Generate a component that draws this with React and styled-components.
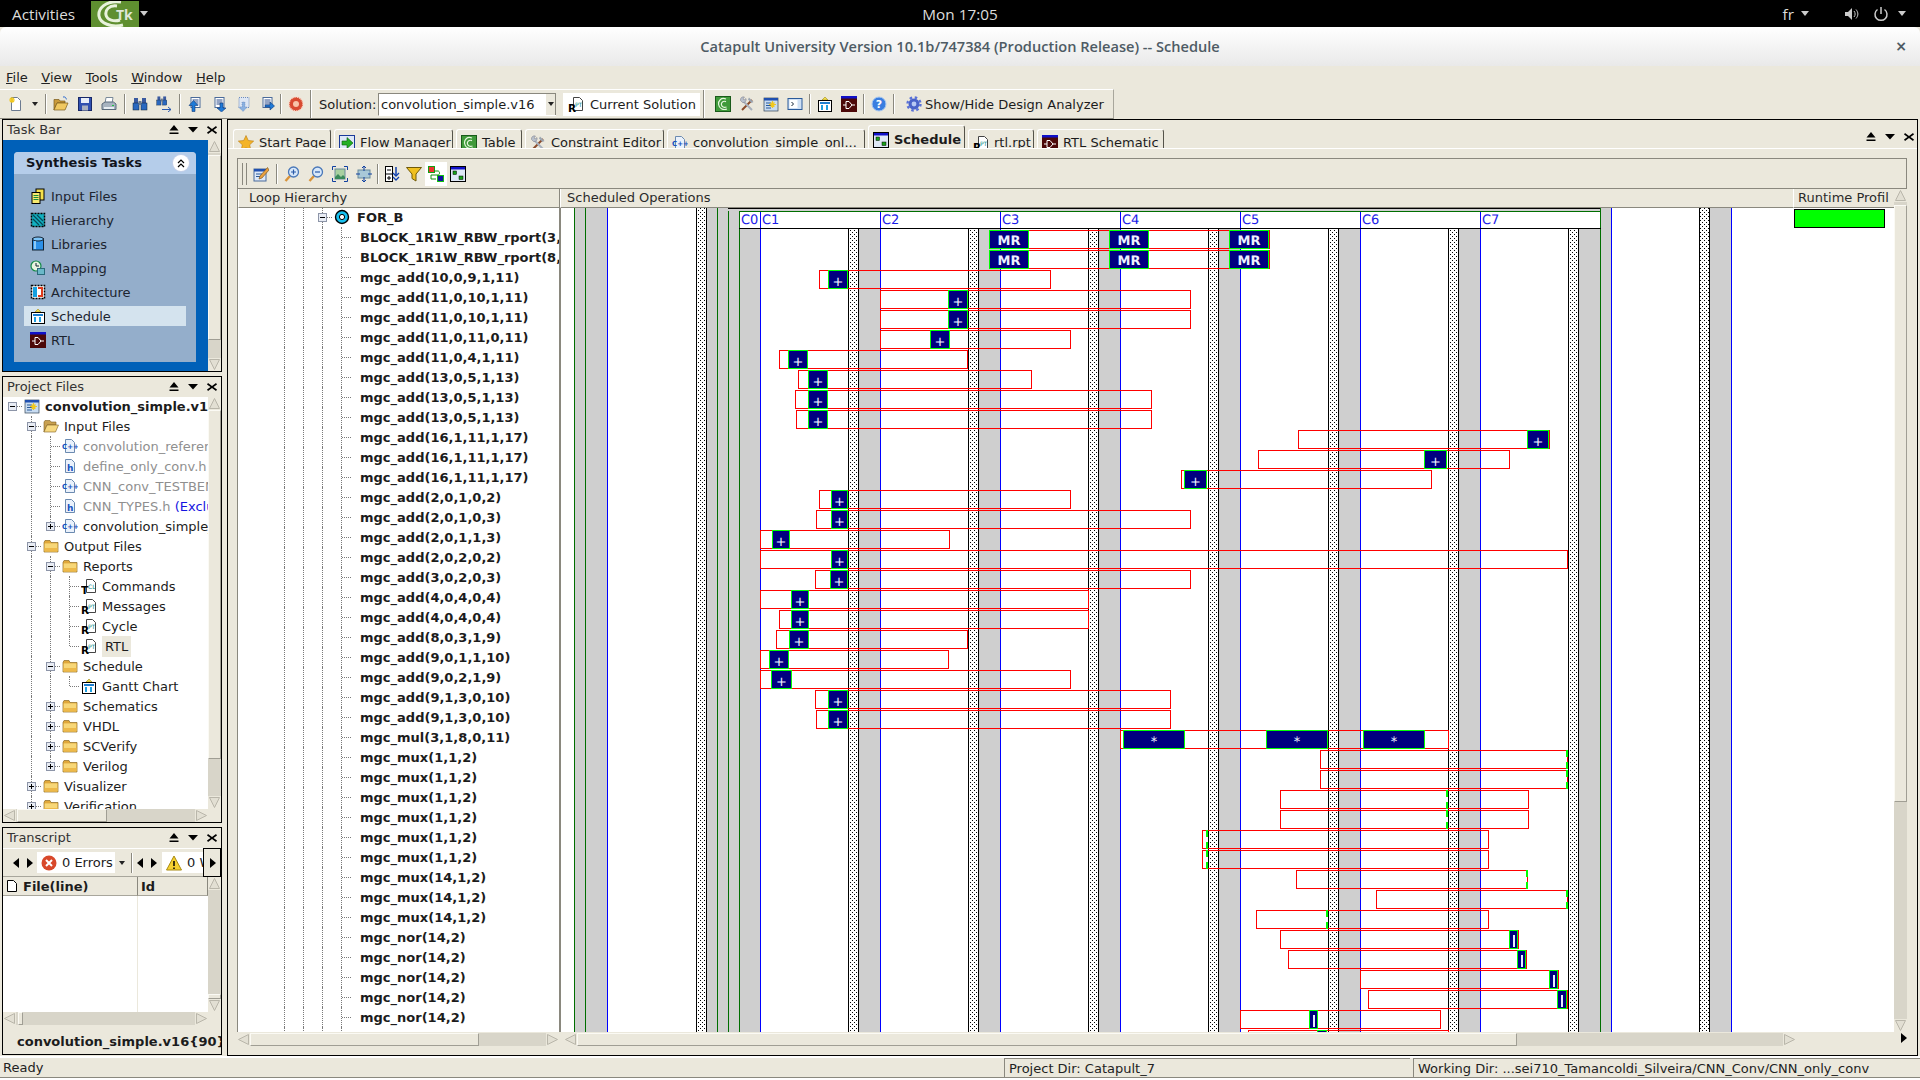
import React from 'react';
import styled, { createGlobalStyle } from 'styled-components';

const BASE = '#ebe8dc';
const UI = '"DejaVu Sans", sans-serif';
const SHELL = '"Open Sans", "Noto Sans", sans-serif';

const GlobalStyle = createGlobalStyle`
  html, body { margin: 0; padding: 0; background: #fff; overflow: hidden; }
  body { font: 13px ${UI}; color: #1c1c1c; }
  * { box-sizing: border-box; }
`;

/* ---------- small pixmap style icons ---------- */
const doc = (fill = '#fff', stroke = '#6b7a90') => (
  <path d="M3.5 1.5h6l3 3v10h-9z" fill={fill} stroke={stroke} />
);
const folder = (
  <>
    <path d="M1 4.5l1-2h5l1 2h7v9.5H1z" fill="#e0a83a" stroke="#8c6a22" strokeWidth=".7" />
    <path d="M1.6 5.4h12.8v8H1.6z" fill="#f7d778" />
    <path d="M1.6 10h12.8v3.4H1.6z" fill="#edb94a" />
  </>
);
const rptDoc = (a, b) => (
  <>
    <g transform="translate(2 0)">{doc('#fff', '#444')}</g>
    <text x="7" y="11" fontSize="6" fill="#0a8a8a" fontFamily={UI}>{b}</text>
    <text x="0" y="15.5" fontSize="10.500" fontWeight="700" fill="#000" fontFamily={UI}>{a}</text>
  </>
);
const schedIcon = (
  <>
    <path d="M5 4l3-3 3 3z" fill="#f4e04a" stroke="#a08a20" strokeWidth=".6" />
    <rect x="1.5" y="4.5" width="13" height="11" fill="#fff" stroke="#000" />
    <rect x="3" y="6" width="10" height="2" fill="#1e7fd0" />
    <rect x="4" y="9" width="2" height="5" fill="#1e9fe0" />
    <rect x="9" y="9" width="2" height="5" fill="#1e9fe0" />
  </>
);
const rtlIcon = (
  <>
    <rect x="0" y="0" width="16" height="16" fill="#4c0808" />
    <rect x="0" y="0" width="16" height="2.5" fill="#1010c8" />
    <path d="M2 9h3M11 9h3M5 5.5h3l3 3.5-3 3.5H5z" fill="none" stroke="#fff" />
  </>
);
const windowIcon = (
  <>
    <rect x=".5" y=".5" width="15" height="15" fill="#dfe8f6" stroke="#000" />
    <rect x="1" y="1" width="14" height="2.5" fill="#1010c8" />
    <rect x="3" y="5" width="3.5" height="3.5" fill="#18a018" stroke="#000" strokeWidth=".5" />
    <rect x="9" y="10" width="4" height="3.5" fill="#18a018" stroke="#000" strokeWidth=".5" />
  </>
);
const arrowDoc = (arrow) => (
  <>
    <rect x="4" y="1.5" width="9" height="10" fill="#fff" stroke="#4a6a9a" />
    <path d="M5.5 4h6M5.5 6h6M5.5 8h6" stroke="#2a4a8a" />
    {arrow}
  </>
);
const binoc = (
  <>
    <rect x="2" y="2" width="4" height="5" fill="#3a5aa0" />
    <rect x="10" y="2" width="4" height="5" fill="#3a5aa0" />
    <rect x="1" y="7" width="6" height="7" fill="#2a68c0" stroke="#123" strokeWidth=".5" />
    <rect x="9" y="7" width="6" height="7" fill="#2a68c0" stroke="#123" strokeWidth=".5" />
    <rect x="6.5" y="5" width="3" height="4" fill="#6a7a90" />
  </>
);
const lens = (sign) => (
  <>
    <path d="M6 10l-4.5 5" stroke="#d8933a" strokeWidth="2.4" />
    <circle cx="9.5" cy="6" r="5" fill="#d8e8fa" stroke="#4a78b8" strokeWidth="1.3" />
    <path d={sign} stroke="#2a5aa8" strokeWidth="1.2" />
  </>
);
const fitIcon = (
  <>
    <rect x="3" y="3" width="10" height="10" fill="#a8d0a0" stroke="#6a8a9a" />
    <path d="M3 11l3-3 3 3 2-2 2 2v2H3z" fill="#3a8a5a" />
    <path d="M.5 4V.5H4M12 .5h3.5V4M15.5 12v3.5H12M4 15.5H.5V12" fill="none" stroke="#1040a0" />
  </>
);

const ICONS = {
  newDoc: <>{doc()}<path d="M4 1v6M1 4h6M2 2l4 4M6 2L2 6" stroke="#f0c820" strokeWidth="1.2" /></>,
  open: (
    <>
      <path d="M1 3.5h5l1 1.5h5v2H4L1 14z" fill="#c99a3a" stroke="#7a5a1a" strokeWidth=".7" />
      <path d="M4 7h11l-3 7H1z" fill="#f0c860" stroke="#7a5a1a" strokeWidth=".7" />
      <path d="M10 1c2-.5 3 .5 3.4 2.4" fill="none" stroke="#2a6ad0" />
    </>
  ),
  save: (
    <>
      <rect x="1.5" y="1.5" width="13" height="13" fill="#3050b0" stroke="#182868" />
      <rect x="4" y="2" width="8" height="5" fill="#e8eef8" />
      <rect x="5" y="9.5" width="6" height="5" fill="#a8b0c0" />
    </>
  ),
  print: (
    <>
      <path d="M5 1.5h7l-1 6H4z" fill="#fff" stroke="#7a8a9a" />
      <path d="M1 8l3-2h8.5L15 8v5.5H1z" fill="#a8b4c0" stroke="#5a6a7a" />
      <rect x="3" y="11" width="10" height="2" fill="#e8eef2" />
      <rect x="11" y="9" width="2" height="1" fill="#20c040" />
    </>
  ),
  binoc,
  binocFind: (
    <g>
      <g transform="translate(0 -1) scale(.72)">{binoc}</g>
      <path d="M6 13.5h9M12 11l3 2.5-3 2.5" fill="none" stroke="#2a5ab0" />
    </g>
  ),
  upDoc: arrowDoc(<path d="M5 15.5v-6H2l4.5-5 4.5 5H8v6z" fill="#1f7ad8" stroke="#103a78" strokeWidth=".6" />),
  downDoc: arrowDoc(<path d="M9 7v5H6l4.5 4 4.5-4h-3V7z" fill="#1f7ad8" stroke="#103a78" strokeWidth=".6" />),
  ghostDoc: (
    <>
      <rect x="4" y="1.5" width="10" height="10" fill="#dde6f4" stroke="#6a8ac0" strokeDasharray="1 1" />
      <path d="M7 6v5H3.5L8 15.5l4.5-4.5H10V6z" fill="#8ab0e0" stroke="#5a7ab0" strokeWidth=".5" strokeDasharray="1 1" />
    </>
  ),
  rightDoc: arrowDoc(<path d="M6 9h5V6l4.5 4-4.5 4v-3H6z" fill="#1f7ad8" stroke="#103a78" strokeWidth=".6" />),
  stop: (
    <>
      <circle cx="8" cy="8" r="7" fill="#d84a30" />
      <circle cx="8" cy="8" r="7" fill="none" stroke="#fbd9c8" strokeDasharray="1 1" strokeWidth="1.6" />
      <circle cx="8" cy="8" r="3" fill="#f8c4a8" />
    </>
  ),
  catapult: (
    <>
      <rect x=".5" y=".5" width="15" height="15" fill="#3f9a3a" stroke="#1a5a1a" />
      <path d="M11 3C6 1 3 5 3.6 8.5 4 12 8 14.6 12 13M11 5.6C8 4.5 6 6.5 6.4 8.6 6.8 11 9 12 11.5 11" fill="none" stroke="#e6f6de" strokeWidth="1.2" />
    </>
  ),
  tools: (
    <>
      <path d="M3 14L13 4" stroke="#8a4a2a" strokeWidth="2" />
      <path d="M10 1.5l4.5 4.5-2 1L9 3.5z" fill="#9aa4b0" />
      <path d="M13 14L4 5" stroke="#a8b0bc" strokeWidth="2" />
      <path d="M1.5 4.5A3 3 0 0 1 5.5 1L4 3l1 1 2-1.500A3 3 0 0 1 3.500 6.500z" fill="#b8c0cc" stroke="#667" strokeWidth=".4" />
    </>
  ),
  project: (
    <>
      <rect x="1" y="2" width="14" height="13" fill="#c8dcf2" stroke="#345" strokeWidth=".7" />
      <rect x="1" y="2" width="14" height="2.500" fill="#2050b0" />
      <path d="M3 7h5M3 9.500h5M3 12h5" stroke="#2a5a9a" />
      <path d="M9.500 5v7M6 8.500h7M7.500 6.500l4 4M11.500 6.500l-4 4" stroke="#f0c820" strokeWidth="1.2" />
    </>
  ),
  term: (
    <>
      <rect x="1" y="2.500" width="14" height="11" fill="#cfe0f4" stroke="#2a5a9a" />
      <rect x="2.500" y="4" width="8" height="8" fill="#fff" />
      <path d="M4.500 6l2 2-2 2" fill="none" stroke="#123" />
    </>
  ),
  sched: schedIcon,
  rtl: rtlIcon,
  help: (
    <>
      <circle cx="8" cy="8" r="7" fill="#3a7ee0" stroke="#a8c8f0" />
      <text x="8" y="12" fontSize="11" fontWeight="700" textAnchor="middle" fill="#fff" fontFamily={UI}>?</text>
    </>
  ),
  gear: (
    <>
      <circle cx="8" cy="8" r="5.500" fill="#4a62c8" />
      <circle cx="8" cy="8" r="6.500" fill="none" stroke="#5a72d8" strokeWidth="2.400" strokeDasharray="2.500 2.600" />
      <circle cx="8" cy="8" r="2.400" fill="#b8c8f4" />
    </>
  ),
  star: <path d="M8 .5l2.300 5 5.400.6-4 3.700 1.100 5.400L8 12.500l-4.800 2.700 1.100-5.400-4-3.700 5.400-.6z" fill="#f4b428" stroke="#b87a10" strokeWidth=".6" />,
  flow: (
    <>
      <rect x=".5" y=".5" width="15" height="15" fill="#dde8f8" stroke="#1a3a9a" />
      <path d="M3 6h5V2.500L14 8l-6 5.500V10H3z" fill="#24b024" stroke="#0a5a0a" strokeWidth=".6" />
    </>
  ),
  cpp: (
    <>
      {doc('#eaf1fb', '#6b8ab0')}
      <text x="0" y="11" fontSize="7" fontWeight="700" fill="#1450c0" fontFamily={UI}>C++</text>
    </>
  ),
  hdr: (
    <>
      {doc('#eaf1fb', '#6b8ab0')}
      <text x="5" y="12.500" fontSize="9" fontWeight="700" fill="#1450c0" fontFamily={UI}>h</text>
    </>
  ),
  win: windowIcon,
  rpt: rptDoc('R', 'PT'),
  tcl: rptDoc('T', 'CL'),
  folder,
  folderOpen: (
    <>
      <path d="M1 4l1-1.500h5L8 4h5v3H4l-3 7z" fill="#c8a050" stroke="#806020" strokeWidth=".6" />
      <path d="M4 7h11.500l-3 7H1z" fill="#f6d880" stroke="#806020" strokeWidth=".6" />
    </>
  ),
  loop: (
    <>
      <circle cx="8" cy="8" r="6.500" fill="#18c0ee" stroke="#000" strokeWidth="1.400" />
      <circle cx="8" cy="8" r="2.600" fill="#fff" stroke="#000" />
    </>
  ),
  inputs: (
    <>
      <rect x="6" y="1" width="8" height="11" fill="#f4e04a" stroke="#000" />
      <rect x="2" y="4.500" width="8" height="11" fill="#f8ea70" stroke="#000" />
      <path d="M3.500 7.500h5M3.500 9.500h5M3.500 11.500h5" stroke="#1a8a3a" />
    </>
  ),
  hier: (
    <>
      <rect x="1.500" y="1.500" width="13" height="13" fill="#12b0c0" stroke="#000" strokeDasharray="2 1" strokeWidth="1.500" />
      <path d="M3 3l10 10M3 7l6 6M7 3l6 6" stroke="#064a5a" strokeWidth="1.300" />
    </>
  ),
  lib: (
    <>
      <rect x="2.500" y="2.500" width="11" height="11.500" fill="#2c90e8" stroke="#123" />
      <ellipse cx="8" cy="3" rx="5.500" ry="2" fill="#7cc4f8" stroke="#123" />
      <rect x="4" y="5" width="2" height="8" fill="#8ccaf8" />
    </>
  ),
  map: (
    <>
      <circle cx="6" cy="6" r="5" fill="#e8f4e0" stroke="#148a48" strokeWidth="1.200" />
      <path d="M6 3v3h3" fill="none" stroke="#123" />
      <rect x="7.500" y="8.500" width="7" height="6" fill="#6ab8c8" stroke="#2a6a7a" />
    </>
  ),
  arch: (
    <>
      <rect x="1.500" y="1.500" width="13" height="13" fill="#fff" stroke="#000" strokeDasharray="2 1" strokeWidth="1.500" />
      <rect x="3" y="3" width="4" height="10" fill="#16a0e0" />
      <path d="M8 3h5v10H8v-2h3V5H8z" fill="#e03a1a" />
    </>
  ),
  edit: (
    <>
      <rect x="1" y="3" width="12" height="12" fill="#dde8f8" stroke="#4a6a9a" />
      <rect x="1" y="3" width="12" height="2.500" fill="#2050b0" />
      <path d="M3 8h6M3 10.500h4" stroke="#2a5a9a" />
      <path d="M14.500 1.500L7 10l-1 3 3-1 7-8z" fill="#e8a040" stroke="#704a10" strokeWidth=".6" />
    </>
  ),
  zoomIn: lens('M7 6h5M9.500 3.500v5'),
  zoomOut: lens('M7 6h5'),
  fit: fitIcon,
  fit2: (
    <>
      <rect x="2" y="4" width="12" height="8" fill="#a8c8d8" stroke="#6a8a9a" />
      <path d="M8 0v5M6 2l2-2 2 2M8 16v-5M6 14l2 2 2-2M0 8h4M12 8h4" fill="none" stroke="#1040a0" />
    </>
  ),
  split: (
    <>
      <rect x="1.500" y=".5" width="7" height="15" fill="#fff" stroke="#000" />
      <path d="M1.500 8h7M3 4h4M5 10v4M3 12h4" stroke="#000" />
      <path d="M12 1v9" stroke="#1040b0" strokeWidth="1.500" />
      <path d="M9 7l3 3 3-3M9 11l3 3 3-3" fill="none" stroke="#1040b0" strokeWidth="1.300" />
    </>
  ),
  filter: <path d="M.5 1.500h15L10 8v7l-4-2.500V8z" fill="#f0c020" stroke="#705a08" />,
  route: (
    <>
      <rect x=".5" y=".5" width="6" height="6" fill="#f03030" stroke="#12a012" />
      <rect x="9.500" y="9.500" width="6" height="6" fill="#1010a0" stroke="#12c012" />
      <path d="M6 5h4c2 0 2 4 0 4H3v4h5" fill="none" stroke="#109010" />
    </>
  ),
};

const IconSvg = styled.svg`
  flex: none;
  display: block;
`;

const Ico = ({ n, s = 16 }) => (
  <IconSvg width={s} height={s} viewBox="0 0 16 16">{ICONS[n]}</IconSvg>
);

/* ---------- desktop chrome ---------- */
const Screen = styled.div`
  width: 1920px;
  height: 1080px;
  display: flex;
  flex-direction: column;
  overflow: hidden;
  background: ${BASE};
`;

const GnomeBar = styled.div`
  height: 27px;
  flex: none;
  background: #000;
  color: #dcdcdc;
  font: 15.300px ${SHELL};
  display: grid;
  grid-template-columns: 1fr auto 1fr;
  align-items: center;
`;

const GnomeLeft = styled.div`
  display: flex;
  align-items: center;
  padding-left: 12px;
`;

const GnomeRight = styled.div`
  display: flex;
  align-items: center;
  justify-content: flex-end;
  padding-right: 14px;
`;

const AppTile = styled.div`
  width: 48px;
  height: 26px;
  margin-left: 16px;
  align-self: flex-start;
`;

const Caret = styled.span`
  width: 0;
  height: 0;
  margin-left: ${(p) => p.$ml || 0}px;
  border-left: 4px solid transparent;
  border-right: 4px solid transparent;
  border-top: 5px solid #ccc;
`;

const TrayIcon = styled.svg`
  display: block;
  flex: none;
  margin-left: ${(p) => p.$ml}px;
`;

const TitleBar = styled.div`
  height: 39px;
  flex: none;
  padding-bottom: 1px;
  border-radius: 6px 6px 0 0;
  background: linear-gradient(#ffffff, #e9e9e9);
  display: flex;
  align-items: center;
  justify-content: center;
  position: relative;
  color: #4e5b64;
  font: 600 14.600px ${SHELL};
`;

const WinClose = styled.span`
  position: absolute;
  right: 13px;
  top: 11px;
  font: 700 14px ${UI};
  color: #4e5b64;
`;

const MenuBar = styled.div`
  height: 23px;
  flex: none;
  display: flex;
  padding-left: 6px;
  align-items: center;
  gap: 13.500px;
`;

const Menu = styled.span`
  color: #222;
  u { text-decoration-thickness: 1px; }
`;

const ToolBar = styled.div`
  height: 30px;
  width: 1114px;
  flex: none;
  display: flex;
  align-items: center;
  padding-left: 4px;
  border-top: 1px solid #fff;
  border-bottom: 1px solid #8a887e;
  border-right: 1px solid #a8a69c;
`;

const ToolBtn = styled.span`
  width: ${(p) => p.$w || 24}px;
  height: 24px;
  flex: none;
  display: flex;
  align-items: center;
  justify-content: center;
  background: ${(p) => (p.$on ? '#fff' : 'transparent')};
`;

const Sep = styled.span`
  width: 1px;
  height: ${(p) => p.$h || 20}px;
  flex: none;
  margin: 0 ${(p) => p.$r ?? 3}px 0 ${(p) => p.$l ?? 3}px;
  background: #8a887e;
  box-shadow: 1px 0 0 #fff;
`;

const MiniArrow = styled.span`
  width: 0;
  height: 0;
  border-left: 3px solid transparent;
  border-right: 3px solid transparent;
  border-top: 4px solid #222;
`;

const FieldLabel = styled.span`
  width: 59px;
  margin-left: 6px;
  flex: none;
  white-space: nowrap;
`;

const Combo = styled.div`
  width: 178px;
  height: 23px;
  display: flex;
  align-items: stretch;
  background: #fff;
  border-top: 1px solid #8a887e;
  border-left: 1px solid #8a887e;
  border-bottom: 1px solid #fff;
  flex: none;
`;

const ComboText = styled.span`
  flex: 1;
  padding: 3px 0 0 2px;
  white-space: nowrap;
  overflow: hidden;
`;

const ComboBtn = styled.span`
  width: 10px;
  background: ${BASE};
  border-right: 1px solid #8a887e;
  display: flex;
  align-items: center;
  justify-content: center;
`;

const PlainButton = styled.div`
  height: 23px;
  width: ${(p) => p.$w}px;
  margin-left: ${(p) => p.$ml || 0}px;
  flex: none;
  display: flex;
  align-items: center;
  gap: ${(p) => p.$gap ?? 6}px;
  padding-left: 5px;
  background: ${(p) => (p.$flat ? 'transparent' : '#fff')};
  white-space: nowrap;
`;

/* ---------- workspace ---------- */
const Workspace = styled.div`
  height: 937px;
  flex: none;
  display: flex;
  background: ${BASE};
`;

const LeftColumn = styled.div`
  width: 227px;
  flex: none;
  padding-left: 2px;
  padding-right: 5px;
  display: flex;
  flex-direction: column;
  gap: 4px;
`;

const Dock = styled.section`
  height: ${(p) => p.$h}px;
  flex: none;
  border: 1px solid #000;
  display: flex;
  flex-direction: column;
  overflow: hidden;
`;

const DockTitle = styled.header`
  height: 20px;
  flex: none;
  display: flex;
  align-items: center;
  justify-content: space-between;
  padding: 0 3px 1px 4px;
  color: #333;
`;

const DockBtns = styled.div`
  display: flex;
  align-items: center;
  gap: ${(p) => p.$gap || 7}px;
`;

const DockButtons = ({ gap }) => (
  <DockBtns $gap={gap}>
    <svg width="12" height="10" viewBox="0 0 12 10"><path d="M6 0l4.500 5.500h-9zM1.500 7.500h9V9h-9z" fill="#000" /></svg>
    <svg width="12" height="10" viewBox="0 0 12 10"><path d="M1 2h10L6 7.500z" fill="#000" /></svg>
    <svg width="12" height="10" viewBox="0 0 12 10"><path d="M2 1l4 3 4-3 1 1.500L7.500 5 11 7.500 10 9 6 6 2 9 1 7.500 4.500 5 1 2.500z" fill="#000" /></svg>
  </DockBtns>
);

const FillRow = styled.div`
  flex: 1;
  min-height: 0;
  display: flex;
  background: ${(p) => p.$bg || '#fff'};
`;

const TaskPane = styled.div`
  flex: 1;
  padding: 12px 12px 9px 11px;
`;

const TaskCard = styled.div`
  height: 100%;
  background: #94aecb;
  border-radius: 4px 4px 0 0;
  display: flex;
  flex-direction: column;
`;

const TaskHead = styled.div`
  height: 22px;
  flex: none;
  background: #b5cdea;
  border-radius: 4px 4px 0 0;
  display: flex;
  align-items: center;
  justify-content: space-between;
  padding: 0 7px 1px 12px;
  font-weight: 700;
  color: #10141c;
`;

const Collapse = styled.span`
  width: 16px;
  height: 16px;
  border-radius: 50%;
  background: #fff;
  box-shadow: 0 0 0 1px #c4cfe8;
  display: flex;
  align-items: center;
  justify-content: center;
`;

const TaskList = styled.div`
  padding: 12px 10px 0;
  display: flex;
  flex-direction: column;
  gap: 4px;
`;

const TaskItem = styled.div`
  height: 20px;
  display: flex;
  align-items: center;
  gap: 5px;
  padding-left: 6px;
  background: ${(p) => (p.$on ? '#d4e3ee' : 'transparent')};
  color: #1c2530;
`;

const TreePane = styled.div`
  flex: 1;
  min-width: 0;
  overflow: hidden;
  background: #fff;
`;

const TreeScroll = styled.div`
  margin: -1px 0 0 ${(p) => p.$ml || 0}px;
`;

const TreeLine = styled.div`
  height: 20px;
  display: flex;
  align-items: center;
  white-space: nowrap;
`;

const Cell = styled.span`
  width: 19px;
  height: 20px;
  flex: none;
  position: relative;
  display: flex;
  align-items: center;
  justify-content: center;
  ${(p) => p.$v && `
    &::before {
      content: '';
      position: absolute;
      left: 9px;
      top: 0;
      height: ${p.$v === 'half' ? '10px' : '20px'};
      border-left: 1px dotted #7a7a7a;
    }
  `}
  ${(p) => p.$h && `
    &::after {
      content: '';
      position: absolute;
      left: 10px;
      top: 10px;
      width: 9px;
      border-top: 1px dotted #7a7a7a;
    }
  `}
`;

const Expander = styled.span`
  width: 9px;
  height: 9px;
  position: relative;
  z-index: 1;
  background: #e8ecf4;
  border: 1px solid #8d95a8;
  display: block;
`;

const ExpMark = styled.svg`
  display: block;
`;

const Label = styled.span`
  margin-left: ${(p) => p.$ml ?? 4}px;
  font-weight: ${(p) => (p.$bold ? 700 : 400)};
  color: ${(p) => p.$color || '#1c1c1c'};
  background: ${(p) => p.$bg || 'transparent'};
  padding: ${(p) => (p.$bg ? '3px 3px' : '0')};
  b { font-weight: 400; color: #1414e0; }
`;

const TreeRow = ({ guides, elbow, exp, icon, children, ...label }) => (
  <TreeLine>
    {guides.map((g, i) => <Cell key={i} $v={g ? 'full' : undefined} />)}
    <Cell $v={elbow} $h={!!elbow || !!exp}>
      {exp && (
        <Expander>
          <ExpMark width="7" height="7" viewBox="0 0 7 7">
            <path d={exp === '+' ? 'M1 3.500h5M3.500 1v5' : 'M1 3.500h5'} stroke="#000" />
          </ExpMark>
        </Expander>
      )}
    </Cell>
    {icon ? <Cell><Ico n={icon} /></Cell> : null}
    <Label {...label}>{children}</Label>
  </TreeLine>
);

const GREY = '#8f8f8f';
const L2 = [false, true];
const L3 = [false, true, true];

const PROJECT_ROWS = [
  { guides: [], exp: '-', icon: 'project', bold: true, t: 'convolution_simple.v16 (extract)' },
  { guides: [false], elbow: 'full', exp: '-', icon: 'folderOpen', t: 'Input Files' },
  { guides: L2, elbow: 'full', icon: 'cpp', c: GREY, t: 'convolution_reference.cpp' },
  { guides: L2, elbow: 'full', icon: 'hdr', c: GREY, t: 'define_only_conv.h' },
  { guides: L2, elbow: 'full', icon: 'cpp', c: GREY, t: 'CNN_conv_TESTBENCH.cpp' },
  { guides: L2, elbow: 'full', icon: 'hdr', c: GREY, t: <>CNN_TYPES.h <b>(Excluded)</b></> },
  { guides: L2, elbow: 'half', exp: '+', icon: 'cpp', t: 'convolution_simple_only.cpp' },
  { guides: [false], elbow: 'full', exp: '-', icon: 'folder', t: 'Output Files' },
  { guides: L2, elbow: 'full', exp: '-', icon: 'folder', t: 'Reports' },
  { guides: L3, elbow: 'full', icon: 'tcl', t: 'Commands' },
  { guides: L3, elbow: 'full', icon: 'rpt', t: 'Messages' },
  { guides: L3, elbow: 'full', icon: 'rpt', t: 'Cycle' },
  { guides: L3, elbow: 'half', icon: 'rpt', bg: BASE, t: 'RTL' },
  { guides: L2, elbow: 'full', exp: '-', icon: 'folder', t: 'Schedule' },
  { guides: L3, elbow: 'half', icon: 'sched', t: 'Gantt Chart' },
  { guides: L2, elbow: 'full', exp: '+', icon: 'folder', t: 'Schematics' },
  { guides: L2, elbow: 'full', exp: '+', icon: 'folder', t: 'VHDL' },
  { guides: L2, elbow: 'full', exp: '+', icon: 'folder', t: 'SCVerify' },
  { guides: L2, elbow: 'half', exp: '+', icon: 'folder', t: 'Verilog' },
  { guides: [false], elbow: 'full', exp: '+', icon: 'folder', t: 'Visualizer' },
  { guides: [false], elbow: 'full', exp: '+', icon: 'folder', t: 'Verification' },
];

const TASKS = [
  ['inputs', 'Input Files'],
  ['hier', 'Hierarchy'],
  ['lib', 'Libraries'],
  ['map', 'Mapping'],
  ['arch', 'Architecture'],
  ['sched', 'Schedule'],
  ['rtl', 'RTL'],
];

/* ---------- scrollbars ---------- */
const Track = styled.div`
  flex: none;
  display: flex;
  flex-direction: ${(p) => (p.$v ? 'column' : 'row')};
  ${(p) => (p.$v ? 'width: 13px;' : 'height: 13px;')}
  background: #d8d5c9;
`;

const Thumb = styled.div`
  flex: none;
  ${(p) => (p.$v ? `height: ${p.$size}px;` : `width: ${p.$size}px;`)}
  margin-${(p) => (p.$v ? 'top' : 'left')}: ${(p) => p.$at || 0}px;
  background: ${BASE};
  border: 1px solid;
  border-color: #fbfaf4 #a09e94 #a09e94 #fbfaf4;
`;

const Rest = styled.div`
  flex: 1;
`;

const ArrowBtn = styled.svg`
  flex: none;
  display: block;
  background: ${BASE};
`;

const ARROW = { up: 'M6.500 1.500L11.500 11.500H1.500z', down: 'M6.500 11.500L1.500 1.500H11.500z', left: 'M1.500 6.500L11.500 1.500V11.500z', right: 'M11.500 6.500L1.500 1.500V11.500z' };

const Arrow = ({ dir }) => (
  <ArrowBtn width="13" height="13" viewBox="0 0 13 13">
    <path d={ARROW[dir]} fill="#e2dfd3" stroke="#b9b6aa" />
  </ArrowBtn>
);

const ScrollBar = ({ v, at, thumb, width }) => (
  <Track $v={v} style={width ? { width } : undefined}>
    <Arrow dir={v ? 'up' : 'left'} />
    <Thumb $v={v} $size={thumb} $at={at} />
    <Rest />
    <Arrow dir={v ? 'down' : 'right'} />
  </Track>
);

/* ---------- transcript ---------- */
const TranscriptBar = styled.div`
  height: 29px;
  flex: none;
  display: flex;
  align-items: center;
  padding-left: 10px;
  position: relative;
  border-top: 1px solid #fff;
  border-bottom: 1px solid #a8a69c;
`;

const Tri = styled.svg`
  flex: none;
  display: block;
  margin-left: ${(p) => p.$ml || 0}px;
`;

const TriLeft = (p) => <Tri width="7" height="10" viewBox="0 0 7 10" {...p}><path d="M6 0v10L0 5z" fill="#000" /></Tri>;
const TriRight = (p) => <Tri width="7" height="10" viewBox="0 0 7 10" {...p}><path d="M1 0v10l6-5z" fill="#000" /></Tri>;

const CountField = styled.div`
  height: 21px;
  width: ${(p) => p.$w}px;
  margin-left: ${(p) => p.$ml}px;
  flex: none;
  background: #fff;
  display: flex;
  align-items: center;
  gap: 5px;
  padding-left: 4px;
  white-space: nowrap;
  overflow: hidden;
`;

const MoreBtn = styled.div`
  position: absolute;
  right: 0;
  top: -1px;
  width: 18px;
  height: 29px;
  background: ${BASE};
  border: 1px solid #000;
  display: flex;
  align-items: center;
  justify-content: center;
`;

const TableHead = styled.div`
  height: 19px;
  flex: none;
  display: flex;
  font-weight: 700;
  background: ${BASE};
`;

const HeadCell = styled.div`
  width: ${(p) => p.$w}px;
  flex: none;
  display: flex;
  align-items: center;
  gap: 5px;
  padding-left: 3px;
  border-right: 1px solid #8a887e;
  border-bottom: 1px solid #a8a69c;
`;

const Blank = styled.div`
  flex: 1;
  display: flex;
  background: #fff;
  min-width: 0;
`;

const BlankCol = styled.div`
  width: 135px;
  border-right: 1px solid ${BASE};
`;

const VStack = styled.div`
  flex: 1;
  min-width: 0;
  display: flex;
  flex-direction: column;
`;

const SessionName = styled.div`
  height: 29px;
  flex: none;
  padding: 3px 0 0 14px;
  display: flex;
  align-items: center;
  font-weight: 700;
  white-space: nowrap;
  overflow: hidden;
`;

/* ---------- main area ---------- */
const MainDock = styled.section`
  flex: 1;
  min-width: 0;
  margin-right: 2px;
  border: 1px solid #000;
  display: flex;
  flex-direction: column;
`;

const TabRow = styled.div`
  height: 29px;
  flex: none;
  display: flex;
  align-items: flex-end;
  justify-content: space-between;
  padding: 0 2px 0 5px;
  border-bottom: 1px solid #fff;
`;

const Tabs = styled.div`
  display: flex;
  align-items: flex-end;
  gap: 3px;
`;

const Tab = styled.div`
  width: ${(p) => p.$w}px;
  height: ${(p) => (p.$on ? 23 : 19)}px;
  flex: none;
  padding: ${(p) => (p.$on ? '6px' : '5px')} 0 0 4px;
  display: flex;
  gap: 5px;
  overflow: hidden;
  white-space: nowrap;
  font-weight: ${(p) => (p.$on ? 700 : 400)};
  border-top: 1px solid #fff;
  border-left: 1px solid #fff;
  border-right: 1px solid #55534a;
  border-radius: 3px 3px 0 0;
`;

const TabDock = styled.div`
  align-self: center;
  padding-top: 5px;
`;

const Inner = styled.div`
  flex: 1;
  min-height: 0;
  padding: 9px 10px 0 9px;
  display: flex;
  flex-direction: column;
`;

const ScheduleBar = styled.div`
  height: 31px;
  flex: none;
  display: flex;
  align-items: center;
  padding-left: 4px;
  border: 1px solid #8a887e;
`;

const Handle = styled.span`
  width: 5px;
  height: 22px;
  flex: none;
  margin-right: 2px;
  border-left: 1px solid #8a887e;
  border-right: 1px solid #8a887e;
`;

const Content = styled.div`
  height: 843px;
  flex: none;
  display: flex;
  border-left: 1px solid #8a887e;
`;

const Column = styled.div`
  width: ${(p) => p.$w}px;
  flex: none;
  display: flex;
  flex-direction: column;
  overflow: hidden;
  background: #fff;
`;

const ColHead = styled.div`
  height: 19px;
  flex: none;
  background: ${BASE};
  padding: 1px 0 0 ${(p) => p.$pl || 5}px;
  color: #2a2a2a;
  white-space: nowrap;
  overflow: hidden;
  border-left: 1px solid #fff;
  border-bottom: 1px solid #8a887e;
`;

const LoopCol = styled(Column)`
  border-right: 1px solid #8a887e;
`;

const ChartSvg = styled.svg`
  display: block;
  flex: none;
  width: 1232px;
  height: 824px;
  box-sizing: border-box;
  border-left: 1px solid #8a887e;
`;

const ChartText = styled.text`
  font-family: ${UI};
  font-size: 13px;
  font-weight: ${(p) => (p.$bold ? 700 : 400)};
  fill: ${(p) => p.$fill};
  text-rendering: geometricPrecision;
`;

const Meter = styled.div`
  width: 91px;
  height: 19px;
  margin: 1px 0 0 1px;
  background: #00ff00;
  border: 1px solid #000;
  flex: none;
`;

const BottomRow = styled.div`
  height: 12px;
  margin-top: 1px;
  flex: none;
  display: flex;
  align-items: flex-start;
`;

const ScrollSlot = styled.div`
  width: ${(p) => p.$w}px;
  margin-left: ${(p) => p.$ml || 0}px;
  flex: none;
  overflow: hidden;
`;

/* ---------- status bar ---------- */
const StatusBar = styled.footer`
  height: 22px;
  flex: none;
  display: flex;
  align-items: stretch;
  white-space: nowrap;
  border-top: 2px solid #fff;
  border-bottom: 1px solid #8a887e;
`;

const StatusCell = styled.div`
  width: ${(p) => p.$w}px;
  margin-left: ${(p) => p.$ml || 0}px;
  flex: none;
  padding: 2px 0 0 ${(p) => p.$pl || 4}px;
  color: #222;
  overflow: hidden;
  ${(p) => (p.$sunken ? 'border-left: 1px solid #8a887e; border-top: 1px solid #8a887e;' : '')}
`;

const WhiteFoot = styled.div`
  flex: 1;
  background: #fff;
`;

/* ---------- schedule chart data ---------- */
const M = (a, b) => [a, b, 'MR'];
const A = (a, b) => [a, b, '+'];
const S = (a, b) => [a, b, '*'];
const T = (a) => [a, a + 2, 'thin'];
const N = (a, b) => [a, b, 'nor'];

const LOOP_NAMES = [
  'BLOCK_1R1W_RBW_rport(3,10,14,1024,1024,14,0)',
  'BLOCK_1R1W_RBW_rport(8,10,14,1024,1024,14,0)',
  'mgc_add(10,0,9,1,11)', 'mgc_add(11,0,10,1,11)', 'mgc_add(11,0,10,1,11)', 'mgc_add(11,0,11,0,11)',
  'mgc_add(11,0,4,1,11)', 'mgc_add(13,0,5,1,13)', 'mgc_add(13,0,5,1,13)', 'mgc_add(13,0,5,1,13)',
  'mgc_add(16,1,11,1,17)', 'mgc_add(16,1,11,1,17)', 'mgc_add(16,1,11,1,17)',
  'mgc_add(2,0,1,0,2)', 'mgc_add(2,0,1,0,3)', 'mgc_add(2,0,1,1,3)', 'mgc_add(2,0,2,0,2)', 'mgc_add(3,0,2,0,3)',
  'mgc_add(4,0,4,0,4)', 'mgc_add(4,0,4,0,4)', 'mgc_add(8,0,3,1,9)', 'mgc_add(9,0,1,1,10)', 'mgc_add(9,0,2,1,9)',
  'mgc_add(9,1,3,0,10)', 'mgc_add(9,1,3,0,10)', 'mgc_mul(3,1,8,0,11)',
  'mgc_mux(1,1,2)', 'mgc_mux(1,1,2)', 'mgc_mux(1,1,2)', 'mgc_mux(1,1,2)', 'mgc_mux(1,1,2)', 'mgc_mux(1,1,2)',
  'mgc_mux(14,1,2)', 'mgc_mux(14,1,2)', 'mgc_mux(14,1,2)',
  'mgc_nor(14,2)', 'mgc_nor(14,2)', 'mgc_nor(14,2)', 'mgc_nor(14,2)', 'mgc_nor(14,2)', 'mgc_nor(14,2)',
];

const BARS = [
  [989, 1269, [M(989, 1029), M(1109, 1149), M(1229, 1269)]],
  [989, 1269, [M(989, 1029), M(1109, 1149), M(1229, 1269)]],
  [819, 1050, [A(828, 848)]],
  [880, 1190, [A(948, 968)]],
  [880, 1190, [A(948, 968)]],
  [880, 1070, [A(930, 950)]],
  [779, 967, [A(788, 808)]],
  [798, 1031, [A(808, 828)]],
  [795, 1151, [A(808, 828)]],
  [796, 1151, [A(808, 828)]],
  [1298, 1549, [A(1527, 1549)]],
  [1258, 1509, [A(1424, 1447)]],
  [1181, 1431, [A(1184, 1207)]],
  [819, 1070, [A(831, 848)]],
  [816, 1190, [A(831, 848)]],
  [760, 949, [A(772, 790)]],
  [760, 1567, [A(831, 848)]],
  [815, 1190, [A(830, 848)]],
  [760, 1088, [A(791, 809)]],
  [779, 1088, [A(791, 809)]],
  [776, 967, [A(789, 809)]],
  [760, 948, [A(769, 789)]],
  [760, 1070, [A(771, 792)]],
  [815, 1170, [A(828, 848)]],
  [816, 1170, [A(828, 848)]],
  [1120, 1448, [S(1123, 1185), S(1266, 1328), S(1363, 1425)]],
  [1320, 1567, [T(1566)]],
  [1320, 1567, [T(1566)]],
  [1280, 1528, [T(1446)]],
  [1280, 1528, [T(1446)]],
  [1202, 1488, [T(1206)]],
  [1202, 1488, [T(1206)]],
  [1296, 1527, [T(1526)]],
  [1376, 1567, [T(1566)]],
  [1256, 1488, [T(1326)]],
  [1280, 1518, [N(1509, 1518)]],
  [1288, 1526, [N(1517, 1526)]],
  [1360, 1558, [N(1549, 1558)]],
  [1368, 1567, [N(1557, 1567)]],
  [1240, 1440, [N(1309, 1318)]],
  [1248, 1448, [N(1317, 1327)]],
];

const DOTTED = [696, 848, 968, 1088, 1208, 1328, 1448, 1568, 1699];
const GREY_BANDS = [[574, 607], [706, 760], [858, 880], [978, 1000], [1098, 1120], [1218, 1240], [1338, 1360], [1458, 1480], [1578, 1611], [1709, 1731]];
const BLUE = [607, 760, 880, 1000, 1120, 1240, 1360, 1480, 1611, 1731];
const GREEN = [574, 585, 717, 728, 739, 1600];
const CYCLES = [[741, 'C0'], [762, 'C1'], [882, 'C2'], [1002, 'C3'], [1122, 'C4'], [1242, 'C5'], [1362, 'C6'], [1482, 'C7']];

const Op = ({ op, y }) => {
  const [a, b, kind] = op;
  if (kind === 'thin') {
    return (
      <>
        <rect x={a} y={y} width={2} height={7} fill="#00ff00" />
        <rect x={a} y={y + 12} width={2} height={7} fill="#00ff00" />
      </>
    );
  }
  return (
    <>
      <rect x={a + 0.5} y={y + 0.5} width={b - a - 1} height={18} fill="#000080" stroke="#00ff00" />
      {kind === 'nor' && <rect x={a + 4} y={y + 5} width={2} height={12} fill="#e8ecff" />}
      {kind !== 'nor' && (
        <ChartText x={(a + b) / 2} y={y + (kind === 'MR' ? 15 : 16)} textAnchor="middle" $fill="#eef0ff" $bold={kind === 'MR'}>{kind}</ChartText>
      )}
    </>
  );
};

const Schedule = () => (
  <ChartSvg viewBox="561 208 1231 824" shapeRendering="crispEdges">
    <defs>
      <pattern id="dots" width="4" height="4" patternUnits="userSpaceOnUse">
        <rect width="4" height="4" fill="#fff" />
        <rect x="0" y="0" width="1" height="1" fill="#000" />
        <rect x="2" y="2" width="1" height="1" fill="#000" />
      </pattern>
    </defs>
    <rect x="561" y="208" width="1231" height="824" fill="#fff" />
    {GREY_BANDS.map(([a, b]) => <rect key={a} x={a} y="208" width={b - a} height="824" fill="#cfcfcf" />)}
    {DOTTED.map((x) => <rect key={x} x={x + 0.5} y="207" width="10" height="826" fill="url(#dots)" stroke="#000" />)}
    {GREEN.map((x) => <rect key={x} x={x} y="208" width="1" height="824" fill="#006e00" />)}
    {BLUE.map((x) => <rect key={x} x={x} y="208" width="1" height="824" fill="#0000ff" />)}
    <rect x="728" y="208" width="872" height="3" fill="#cfcfcf" />
    <rect x="728" y="208" width="872" height="1" fill="#000" />
    <rect x="739.500" y="211.500" width="861" height="17" fill="#fff" stroke="#006e00" />
    <rect x="739" y="228" width="862" height="1" fill="#000" />
    {BLUE.slice(1, 8).map((x) => <rect key={x} x={x} y="212" width="1" height="16" fill="#0000ff" />)}
    {CYCLES.map(([x, t]) => <ChartText key={t} x={x} y="224" $fill="#1a1ae8">{t}</ChartText>)}
    {BARS.map(([a, b], i) => (
      <rect key={i} x={a + 0.5} y={230.5 + 20 * i} width={b - a} height="18" fill="none" stroke="#ff0000" />
    ))}
    {BARS.map(([, , ops], i) => ops.map((op) => <Op key={`${i}-${op[0]}`} op={op} y={230 + 20 * i} />))}
  </ChartSvg>
);

const Logo = () => (
  <AppTile>
    <svg width="48" height="26" viewBox="0 0 48 26">
      <rect width="48" height="26" fill="#5f8f30" />
      <path d="M30 1C14-1 7 8 8 15c1 7 12 12 24 9M26 5C18 4 14 9 15 14c1 5 8 7 14 5" fill="none" stroke="#e8f2dc" strokeWidth="3" />
      <text x="25" y="19" fontSize="14" fontWeight="700" fill="#dfe7d8" fontFamily={SHELL}>Tk</text>
    </svg>
  </AppTile>
);

const App = () => (
  <Screen>
    <GlobalStyle />
    <GnomeBar>
      <GnomeLeft>
        <span>Activities</span>
        <Logo />
        <Caret $ml={1} />
      </GnomeLeft>
      <span>Mon 17:05</span>
      <GnomeRight>
        <span>fr</span>
        <Caret $ml={7} />
        <TrayIcon $ml={35} width="16" height="16" viewBox="0 0 16 16">
          <path d="M1 6h3l4-4v12l-4-4H1z" fill="#ccc" />
          <path d="M10 5c1.500 2 1.500 4 0 6M12 3.500c2.500 3 2.500 6 0 9" fill="none" stroke="#ccc" />
        </TrayIcon>
        <TrayIcon $ml={13} width="16" height="16" viewBox="0 0 16 16">
          <path d="M8 1v7M4.500 3.500a6 6 0 1 0 7 0" fill="none" stroke="#ccc" strokeWidth="1.500" />
        </TrayIcon>
        <Caret $ml={9} />
      </GnomeRight>
    </GnomeBar>

    <TitleBar>
      Catapult University Version 10.1b/747384 (Production Release) -- Schedule
      <WinClose>×</WinClose>
    </TitleBar>

    <MenuBar>
      <Menu><u>F</u>ile</Menu>
      <Menu><u>V</u>iew</Menu>
      <Menu><u>T</u>ools</Menu>
      <Menu><u>W</u>indow</Menu>
      <Menu><u>H</u>elp</Menu>
    </MenuBar>

    <ToolBar>
      <ToolBtn><Ico n="newDoc" /></ToolBtn>
      <ToolBtn $w={14}><MiniArrow /></ToolBtn>
      <Sep />
      <ToolBtn><Ico n="open" /></ToolBtn>
      <ToolBtn><Ico n="save" /></ToolBtn>
      <ToolBtn><Ico n="print" /></ToolBtn>
      <Sep />
      <ToolBtn><Ico n="binoc" /></ToolBtn>
      <ToolBtn><Ico n="binocFind" /></ToolBtn>
      <Sep />
      <ToolBtn><Ico n="upDoc" /></ToolBtn>
      <ToolBtn><Ico n="downDoc" /></ToolBtn>
      <ToolBtn><Ico n="ghostDoc" /></ToolBtn>
      <ToolBtn><Ico n="rightDoc" /></ToolBtn>
      <Sep $l={1} />
      <ToolBtn><Ico n="stop" /></ToolBtn>
      <Sep $l={2} $r={2} $h={28} />
      <FieldLabel>Solution:</FieldLabel>
      <Combo>
        <ComboText>convolution_simple.v16</ComboText>
        <ComboBtn><MiniArrow /></ComboBtn>
      </Combo>
      <PlainButton $w={137} $ml={7} $gap={6}><Ico n="rpt" />Current Solution</PlainButton>
      <Sep $h={28} $r={7} />
      <ToolBtn><Ico n="catapult" /></ToolBtn>
      <ToolBtn><Ico n="tools" /></ToolBtn>
      <ToolBtn><Ico n="project" /></ToolBtn>
      <ToolBtn><Ico n="term" /></ToolBtn>
      <Sep $l={2} />
      <ToolBtn><Ico n="sched" /></ToolBtn>
      <ToolBtn><Ico n="rtl" /></ToolBtn>
      <Sep $l={2} />
      <ToolBtn><Ico n="help" /></ToolBtn>
      <Sep $l={2} $r={7} />
      <PlainButton $w={212} $flat $gap={3}><Ico n="gear" />Show/Hide Design Analyzer</PlainButton>
    </ToolBar>

    <Workspace>
      <LeftColumn>
        <Dock $h={253}>
          <DockTitle>Task Bar<DockButtons /></DockTitle>
          <FillRow $bg="#0060b8">
            <TaskPane>
              <TaskCard>
                <TaskHead>
                  Synthesis Tasks
                  <Collapse>
                    <svg width="10" height="10" viewBox="0 0 10 10"><path d="M2 5l3-3 3 3M2 9l3-3 3 3" fill="none" stroke="#000" strokeWidth="1.200" /></svg>
                  </Collapse>
                </TaskHead>
                <TaskList>
                  {TASKS.map(([icon, t]) => (
                    <TaskItem key={t} $on={t === 'Schedule'}><Ico n={icon} />{t}</TaskItem>
                  ))}
                </TaskList>
              </TaskCard>
            </TaskPane>
            <ScrollBar v at={2} thumb={185} />
          </FillRow>
        </Dock>

        <Dock $h={447}>
          <DockTitle>Project Files<DockButtons /></DockTitle>
          <FillRow>
            <TreePane>
              <TreeScroll>
                {PROJECT_ROWS.map((r) => (
                  <TreeRow
                    key={`${r.guides.length}${r.icon}${typeof r.t === 'string' ? r.t : 'types'}`}
                    guides={r.guides}
                    elbow={r.elbow}
                    exp={r.exp}
                    icon={r.icon}
                    $bold={r.bold}
                    $color={r.c}
                    $bg={r.bg}
                  >
                    {r.t}
                  </TreeRow>
                ))}
              </TreeScroll>
            </TreePane>
            <ScrollBar v thumb={349} />
          </FillRow>
          <ScrollBar thumb={90} at={1} width={205} />
        </Dock>

        <Dock $h={228}>
          <DockTitle>Transcript<DockButtons /></DockTitle>
          <TranscriptBar>
            <TriLeft />
            <TriRight $ml={6} />
            <CountField $w={78} $ml={4}>
              <IconSvg width="16" height="16" viewBox="0 0 16 16">
                <circle cx="8" cy="8" r="7.500" fill="#d8482a" />
                <path d="M5 5l6 6M11 5l-6 6" stroke="#fff" strokeWidth="2" />
              </IconSvg>
              0 Errors
            </CountField>
            <ToolBtn $w={14}><MiniArrow /></ToolBtn>
            <Sep $h={20} $l={2} $r={5} />
            <TriLeft />
            <TriRight $ml={6} />
            <CountField $w={42} $ml={5}>
              <IconSvg width="16" height="16" viewBox="0 0 16 16">
                <path d="M8 1l7.500 14H.5z" fill="#f6d030" stroke="#a88a10" />
                <path d="M8 6v5M8 12.500v1.500" stroke="#000" strokeWidth="1.500" />
              </IconSvg>
              0 Warnings
            </CountField>
            <MoreBtn><TriRight /></MoreBtn>
          </TranscriptBar>
          <FillRow $bg={BASE}>
            <VStack>
              <TableHead>
                <HeadCell $w={135}>
                  <svg width="12" height="14" viewBox="0 0 12 14"><path d="M1.500 1.500h6l3 3v8h-9z" fill="#fff" stroke="#000" /></svg>
                  File(line)
                </HeadCell>
                <HeadCell $w={70}>Id</HeadCell>
              </TableHead>
              <Blank><BlankCol /></Blank>
            </VStack>
            <Track $v>
              <Arrow dir="up" />
              <Rest />
              <Thumb $v $size={5} />
              <Arrow dir="down" />
            </Track>
          </FillRow>
          <ScrollBar thumb={5} at={2} width={205} />
          <SessionName>convolution_simple.v16{'{90}'}</SessionName>
        </Dock>
      </LeftColumn>

      <MainDock>
        <TabRow>
          <Tabs>
            <Tab $w={98}><Ico n="star" />Start Page</Tab>
            <Tab $w={119}><Ico n="flow" />Flow Manager</Tab>
            <Tab $w={66}><Ico n="catapult" />Table</Tab>
            <Tab $w={139}><Ico n="tools" />Constraint Editor</Tab>
            <Tab $w={198}><Ico n="cpp" />convolution_simple_onl...</Tab>
            <Tab $w={97} $on><Ico n="win" />Schedule</Tab>
            <Tab $w={66}><Ico n="rpt" />rtl.rpt</Tab>
            <Tab $w={127}><Ico n="rtl" />RTL Schematic</Tab>
          </Tabs>
          <TabDock><DockButtons gap={7} /></TabDock>
        </TabRow>
        <Inner>
          <ScheduleBar>
            <Handle />
            <ToolBtn><Ico n="edit" /></ToolBtn>
            <Sep />
            <ToolBtn><Ico n="zoomIn" /></ToolBtn>
            <ToolBtn><Ico n="zoomOut" /></ToolBtn>
            <ToolBtn><Ico n="fit" /></ToolBtn>
            <ToolBtn><Ico n="fit2" /></ToolBtn>
            <Sep $l={1} />
            <ToolBtn $w={22}><Ico n="split" /></ToolBtn>
            <ToolBtn $w={22}><Ico n="filter" /></ToolBtn>
            <ToolBtn $w={22} $on><Ico n="route" /></ToolBtn>
            <ToolBtn $w={22}><Ico n="win" /></ToolBtn>
          </ScheduleBar>
          <Content>
            <LoopCol $w={322}>
              <ColHead $pl={10}>Loop Hierarchy</ColHead>
              <TreePane>
                <TreeScroll $ml={-1}>
                  <TreeRow guides={[false, false, true, true]} elbow="full" exp="-" icon="loop" $bold $ml={6}>FOR_B</TreeRow>
                  {LOOP_NAMES.map((name, i) => (
                    <TreeRow key={i} guides={[false, false, true, true, true]} elbow="full" $bold $ml={9} icon={null}>
                      {name}
                    </TreeRow>
                  ))}
                </TreeScroll>
              </TreePane>
            </LoopCol>
            <Column $w={1233}>
              <ColHead $pl={6}>Scheduled Operations</ColHead>
              <Schedule />
            </Column>
            <Column $w={101}>
              <ColHead $pl={4}>Runtime Profil</ColHead>
              <Meter />
            </Column>
            <Track $v>
              <Arrow dir="up" />
              <Thumb $v $size={597} $at={3} />
              <Rest />
              <Arrow dir="down" />
            </Track>
          </Content>
          <BottomRow>
            <ScrollSlot $w={322}><ScrollBar thumb={229} width={322} /></ScrollSlot>
            <ScrollSlot $w={1232} $ml={5}><ScrollBar thumb={940} width={1232} /></ScrollSlot>
            <ScrollSlot $w={13} $ml={104}><TriRight /></ScrollSlot>
          </BottomRow>
        </Inner>
      </MainDock>
    </Workspace>

    <StatusBar>
      <StatusCell $w={1004} $pl={3}>Ready</StatusCell>
      <StatusCell $w={406} $sunken>Project Dir: Catapult_7</StatusCell>
      <StatusCell $w={507} $ml={3} $sunken>Working Dir: ...sei710_Tamancoldi_Silveira/CNN_Conv/CNN_only_conv</StatusCell>
    </StatusBar>
    <WhiteFoot />
  </Screen>
);

export default App;
